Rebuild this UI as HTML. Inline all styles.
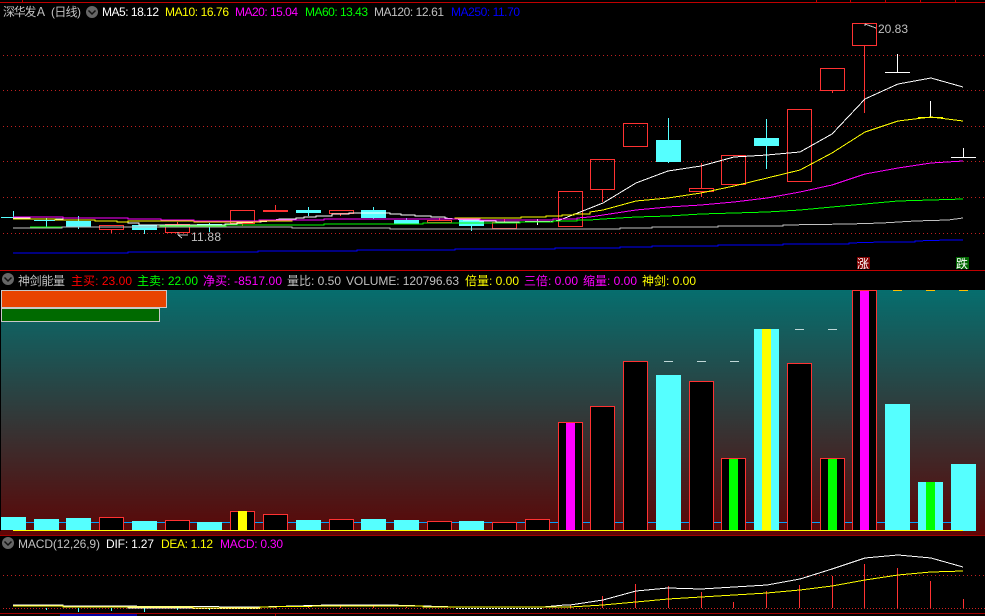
<!DOCTYPE html>
<html><head><meta charset="utf-8"><style>
html,body{margin:0;padding:0;background:#000;width:985px;height:616px;overflow:hidden}
svg{display:block}
text{font-family:"Liberation Sans","WenQuanYi Zen Hei","Noto Sans CJK SC",sans-serif;font-size:12px}
.l{fill:none;shape-rendering:crispEdges}
.d{stroke:#c02020;stroke-width:1;stroke-dasharray:1 3;shape-rendering:crispEdges}
.c{fill:#000;stroke:#ff3232;stroke-width:1;shape-rendering:crispEdges}
.h{fill:none;stroke:#ff3232;stroke-width:1;shape-rendering:crispEdges}
.w{stroke:#55ffff;stroke-width:1;shape-rendering:crispEdges}
.r{stroke:#ff3232;stroke-width:1;shape-rendering:crispEdges}
.f{fill:#55ffff;shape-rendering:crispEdges}
</style></head><body>
<svg width="985" height="616" viewBox="0 0 985 616" xmlns="http://www.w3.org/2000/svg">
<defs><linearGradient id="g" x1="0" y1="0" x2="0" y2="1"><stop offset="0" stop-color="#066e6e"/><stop offset="1" stop-color="#5a0808"/></linearGradient></defs>
<rect width="985" height="616" fill="#000"/>
<!-- frame lines -->
<rect x="0" y="2" width="985" height="1" fill="#c00000"/>
<path d="M22.5 0V2M816.5 0V2M850.5 0V2M885.5 0V2M920.5 0V2M955.5 0V2" stroke="#c00000" class="l"/>
<rect x="0" y="270" width="985" height="1" fill="#c00000"/>
<!-- dotted grid top -->
<path class="d" d="M3 55.5H985M3 90.5H985M3 126.5H985M3 161.5H985M3 197.5H985M3 233.5H985"/>

<!-- candles -->
<path class="w" d="M1 217.500H13M13.500 211V218M46.500 218V227M34 220.500H55M78.500 216V229M144.500 225V234M209.500 223V232M308.500 207V216M373.500 207V219M406.500 218V224M471.500 220V231M668.500 118V140M668.500 162V163M766.500 119V138M766.500 146V169"/>
<rect class="f" x="66" y="221" width="25" height="6"/>
<rect class="f" x="132" y="225" width="25" height="5"/>
<rect class="f" x="197" y="224" width="25" height="3"/>
<rect class="f" x="296" y="210" width="25" height="3"/>
<rect class="f" x="361" y="210" width="25" height="8"/>
<rect class="f" x="394" y="220" width="25" height="4"/>
<rect class="f" x="459" y="220" width="25" height="6"/>
<rect class="f" x="656" y="140" width="25" height="22"/>
<rect class="f" x="754" y="138" width="25" height="8"/>
<rect class="h" x="99.500" y="225.500" width="24" height="4"/>
<path class="r" d="M111.500 229V233M177.500 222V224M242.500 222V226M275.500 205V210M340.500 213V216M439.500 218V220M504.500 219V222M602.500 189V202M701.500 163V188M701.500 191V197M832.500 90V93M864.500 45V113"/>
<rect class="h" x="165.500" y="224.500" width="24" height="8"/>
<rect class="h" x="230.500" y="210.500" width="24" height="13"/>
<rect x="263" y="210" width="25" height="2" fill="#ff3232" style="shape-rendering:crispEdges"/>
<rect class="h" x="329.500" y="210.500" width="24" height="3"/>
<rect class="h" x="427.500" y="220.500" width="24" height="2"/>
<rect class="h" x="492.500" y="222.500" width="24" height="6"/>
<path d="M525 221.500H550M537.500 219V225" stroke="#fff" class="l"/>
<rect class="h" x="558.500" y="191.500" width="24" height="35"/>
<rect class="h" x="590.500" y="159.500" width="24" height="30"/>
<rect class="h" x="623.500" y="123.500" width="24" height="23"/>
<rect class="h" x="689.500" y="188.500" width="24" height="3"/>
<rect class="h" x="721.500" y="155.500" width="24" height="29"/>
<rect class="h" x="787.500" y="109.500" width="24" height="72"/>
<rect class="h" x="820.500" y="68.500" width="24" height="22"/>
<rect class="h" x="852.500" y="23.500" width="24" height="22"/>
<path d="M885 72.500H910M897.500 54V72M930.500 101V117M951 157.500H976M963.500 148V157" stroke="#fff" class="l"/>

<!-- MAs -->
<polyline class="l" stroke="#ffffff" points="13,218 30,218 30,219 63,219 63,220 95,220 95,221 117,221 117,222 128,222 128,223 139,223 139,225 225,225 225,224 237,224 237,223 259,222 270,221 280,219 296,219 296,218 304,218 304,217 316,217 316,216 332,216 332,214 349,214 349,213 390,213 390,214 401,214 401,215 415,215 415,216 431,216 431,217 445,217 445,218 455,219 466,220 480,220 480,221 496,221 496,222 549,222 560,220 570,216 603,203 636,183 668,171 701,166 734,157 767,155 800,152 832,134 865,99 898,84 931,78 963,87"/>
<polyline class="l" stroke="#ffff00" points="13,219 55,219 55,220 95,220 95,221 117,221 117,222 128,222 128,221 194,221 194,222 259,222 259,221 292,221 292,220 324,220 324,219 455,219 455,218 521,218 521,217 546,217 546,216 562,216 562,215 574,215 574,214 590,214 590,212 603,210 636,201 668,198 701,193 734,186 767,178 800,170 832,153 865,132 898,121 931,117 963,121"/>
<path d="M918 117.500H943" stroke="#ffff00" class="l"/>
<polyline class="l" stroke="#ff00ff" points="13,217 63,217 63,218 128,218 128,219 161,219 161,220 194,220 194,221 259,221 259,220 324,220 324,219 480,219 480,220 553,220 553,219 577,219 577,218 590,217 603,215 636,210 668,207 701,205 734,202 767,198 800,192 832,185 865,174 898,168 931,163 963,161"/>
<polyline class="l" stroke="#00ff00" points="30,227 160,227 160,226 226,226 226,225 324,225 324,224 423,224 423,223 520,223 520,222 553,222 553,221 577,221 577,220 590,220 603,219 636,217 668,216 701,214 734,213 767,212 800,210 832,207 865,204 898,201 931,200 963,199"/>
<polyline class="l" stroke="#c0c0c0" points="13,228 62,228 62,227 292,227 292,228 390,228 390,229 620,229 620,228 652,228 652,227 718,227 718,226 783,226 783,225 849,224 882,223 915,221 948,220 963,218"/>
<polyline class="l" stroke="#0000ff" points="13,253 128,253 128,252 258,252 258,251 357,251 357,250 455,250 455,249 555,249 555,248 620,248 620,247 652,247 652,246 718,246 718,245 783,245 783,244 849,244 849,243 882,242 915,242 915,241 948,240 963,240"/>

<!-- header 1 -->
<text x="3" y="16" fill="#c0c0c0" textLength="44">深华发Ａ</text>
<text x="51" y="16" fill="#c0c0c0" textLength="30">(日线)</text>
<circle cx="92" cy="12" r="6" fill="#666"/><path d="M88.500 10.500L92 14L95.500 10.500" fill="none" stroke="#111" stroke-width="1.500"/>
<text x="102" y="16" fill="#fff" textLength="57">MA5: 18.12</text>
<text x="165" y="16" fill="#ffff00" textLength="64">MA10: 16.76</text>
<text x="235" y="16" fill="#ff00ff" textLength="63">MA20: 15.04</text>
<text x="305" y="16" fill="#00ff00" textLength="63">MA60: 13.43</text>
<text x="374" y="16" fill="#c0c0c0" textLength="70">MA120: 12.61</text>
<text x="451" y="16" fill="#0000ff" textLength="69">MA250: 11.70</text>

<!-- price labels -->
<path d="M188 235H178M178 235L178 232M178 235L182 238" fill="none" stroke="#c0c0c0" class="l"/>
<text x="191" y="241" fill="#c0c0c0" textLength="30">11.88</text>
<path d="M865 24L876 28M865 24V26" fill="none" stroke="#c0c0c0" class="l"/>
<text x="878" y="33" fill="#c0c0c0" textLength="30">20.83</text>
<rect x="857" y="257" width="13" height="12" fill="#800000"/>
<text x="857" y="268" fill="#fff">涨</text>
<rect x="956" y="257" width="13" height="12" fill="#006600"/>
<text x="956" y="268" fill="#fff">跌</text>

<!-- header 2 -->
<circle cx="8" cy="279" r="6" fill="#666"/><path d="M4.500 277.500L8 281L11.500 277.500" fill="none" stroke="#111" stroke-width="1.500"/>
<text x="18" y="285" fill="#c0c0c0" textLength="47">神剑能量</text>
<text x="71" y="285" fill="#ff0000" textLength="61">主买: 23.00</text>
<text x="137" y="285" fill="#00ff00" textLength="61">主卖: 22.00</text>
<text x="203" y="285" fill="#ff00ff" textLength="79">净买: -8517.00</text>
<text x="287" y="285" fill="#c0c0c0" textLength="54">量比: 0.50</text>
<text x="346" y="285" fill="#c0c0c0" textLength="113">VOLUME: 120796.63</text>
<text x="465" y="285" fill="#ffff00" textLength="54">倍量: 0.00</text>
<text x="524" y="285" fill="#ff00ff" textLength="54">三倍: 0.00</text>
<text x="583" y="285" fill="#ff00ff" textLength="54">缩量: 0.00</text>
<text x="642" y="285" fill="#ffff00" textLength="54">神剑: 0.00</text>

<!-- volume panel -->
<rect x="1" y="290" width="984" height="241" fill="url(#g)"/>
<rect x="0" y="531" width="985" height="4" fill="#600606"/>
<rect x="0" y="535" width="985" height="1" fill="#a00000"/>
<rect x="1.500" y="290.500" width="165" height="17" fill="#e84400" stroke="#c8c8c8"/>
<rect x="1.500" y="308.500" width="158" height="13" fill="#006a00" stroke="#c8c8c8"/>
<rect x="13" y="522" width="951" height="1" fill="#00a0ff"/>
<path d="M664 361.500H673M697 361.500H706M730 361.500H739M795 329.500H804M828 329.500H837" stroke="#c0d8d8" class="l"/>
<path d="M893 290.500H902M926 290.500H935M959 290.500H968" stroke="#ffc000" class="l"/>

<rect class="f" x="1" y="517" width="25" height="13"/>
<rect class="f" x="34" y="519" width="25" height="11"/>
<rect class="f" x="66" y="518" width="25" height="12"/>
<rect class="c" x="99.500" y="517.500" width="24" height="13"/>
<rect class="f" x="132" y="521" width="25" height="9"/>
<rect class="c" x="165.500" y="520.500" width="24" height="10"/>
<rect class="f" x="197" y="522" width="25" height="8"/>
<rect class="c" x="230.500" y="511.500" width="24" height="19"/>
<rect x="238" y="511" width="9" height="19" fill="#ffff00"/>
<rect class="c" x="263.500" y="514.500" width="24" height="16"/>
<rect class="f" x="296" y="520" width="25" height="10"/>
<rect class="c" x="329.500" y="519.500" width="24" height="11"/>
<rect class="f" x="361" y="519" width="25" height="11"/>
<rect class="f" x="394" y="520" width="25" height="10"/>
<rect class="c" x="427.500" y="521.500" width="24" height="9"/>
<rect class="f" x="459" y="521" width="25" height="9"/>
<rect class="c" x="492.500" y="522.500" width="24" height="8"/>
<rect class="c" x="525.500" y="519.500" width="24" height="11"/>
<rect class="c" x="558.500" y="422.500" width="24" height="108"/>
<rect x="566" y="423" width="9" height="107" fill="#ff00ff"/>
<rect class="c" x="590.500" y="406.500" width="24" height="124"/>
<rect class="c" x="623.500" y="361.500" width="24" height="169"/>
<rect class="f" x="656" y="375" width="25" height="155"/>
<rect class="c" x="689.500" y="381.500" width="24" height="149"/>
<rect class="c" x="721.500" y="458.500" width="24" height="72"/>
<rect x="729" y="459" width="9" height="71" fill="#00ff00"/>
<rect class="f" x="754" y="329" width="25" height="201"/>
<rect x="762" y="329" width="9" height="201" fill="#ffff00"/>
<rect class="c" x="787.500" y="363.500" width="24" height="167"/>
<rect class="c" x="820.500" y="458.500" width="24" height="72"/>
<rect x="828" y="459" width="9" height="71" fill="#00ff00"/>
<rect class="c" x="852.500" y="290.500" width="24" height="240"/>
<rect x="860" y="291" width="9" height="239" fill="#ff00ff"/>
<rect class="f" x="885" y="404" width="25" height="127"/>
<rect class="f" x="918" y="482" width="25" height="49"/>
<rect x="926" y="482" width="9" height="48" fill="#00ff00"/>
<rect class="f" x="951" y="464" width="25" height="67"/>
<rect x="13" y="530" width="950" height="1" fill="#ffff00"/>

<!-- header 3 -->
<circle cx="8" cy="543" r="6" fill="#666"/><path d="M4.500 541.500L8 545L11.500 541.500" fill="none" stroke="#111" stroke-width="1.500"/>
<text x="18" y="548" fill="#c0c0c0" textLength="82">MACD(12,26,9)</text>
<text x="106" y="548" fill="#fff" textLength="48">DIF: 1.27</text>
<text x="161" y="548" fill="#ffff00" textLength="52">DEA: 1.12</text>
<text x="220" y="548" fill="#ff00ff" textLength="63">MACD: 0.30</text>

<!-- MACD -->
<path class="d" d="M3 575.500H985"/>
<path d="M3 608.500H985" stroke="#d02020" stroke-dasharray="1 2" class="l"/>
<path class="w" d="M46.500 608V610M78.500 608V612M111.500 608V611M144.500 608V612M177.500 608V610M209.500 608V610M504.500 608V609"/>
<path class="r" d="M275.500 606V608M308.500 606V608M340.500 605V608M373.500 606V608M406.500 607V608M570.500 605V608M602.500 596V608M635.500 584V608M668.500 586V608M701.500 592V608M733.500 602V608M766.500 591V608M799.500 585V608M832.500 576V608M864.500 564V608M897.500 568V608M930.500 581V608M963.500 599V608"/>
<polyline class="l" stroke="#ffffff" points="95,607 128,607 128,608 193,608"/>
<path d="M193 608.500H260M456 608.500H543" stroke="#ffffff" stroke-dasharray="2 1" class="l"/>
<polyline class="l" stroke="#ffffff" points="13,605 63,605 63,606 95,606 260,607 330,605 357,605 390,605 423,606 456,607 543,607 554,606 565,605 570,605 603,600 636,591 668,588 701,589 734,587 767,585 800,579 832,569 865,558 898,555 931,558 963,567"/>
<polyline class="l" stroke="#ffff00" points="13,606 63,606 63,607 128,607 193,607 193,608 260,608 260,607 330,606 357,606 423,606 423,607 570,607 603,605 636,602 668,599 701,597 734,595 767,593 800,590 832,586 865,580 898,575 931,572 963,571"/>
<rect x="0" y="613" width="985" height="1" fill="#a00000"/>
<rect x="60" y="614" width="77" height="2" fill="#0000a0"/>
<rect x="275" y="614" width="1" height="2" fill="#a00000"/>
</svg>
</body></html>
